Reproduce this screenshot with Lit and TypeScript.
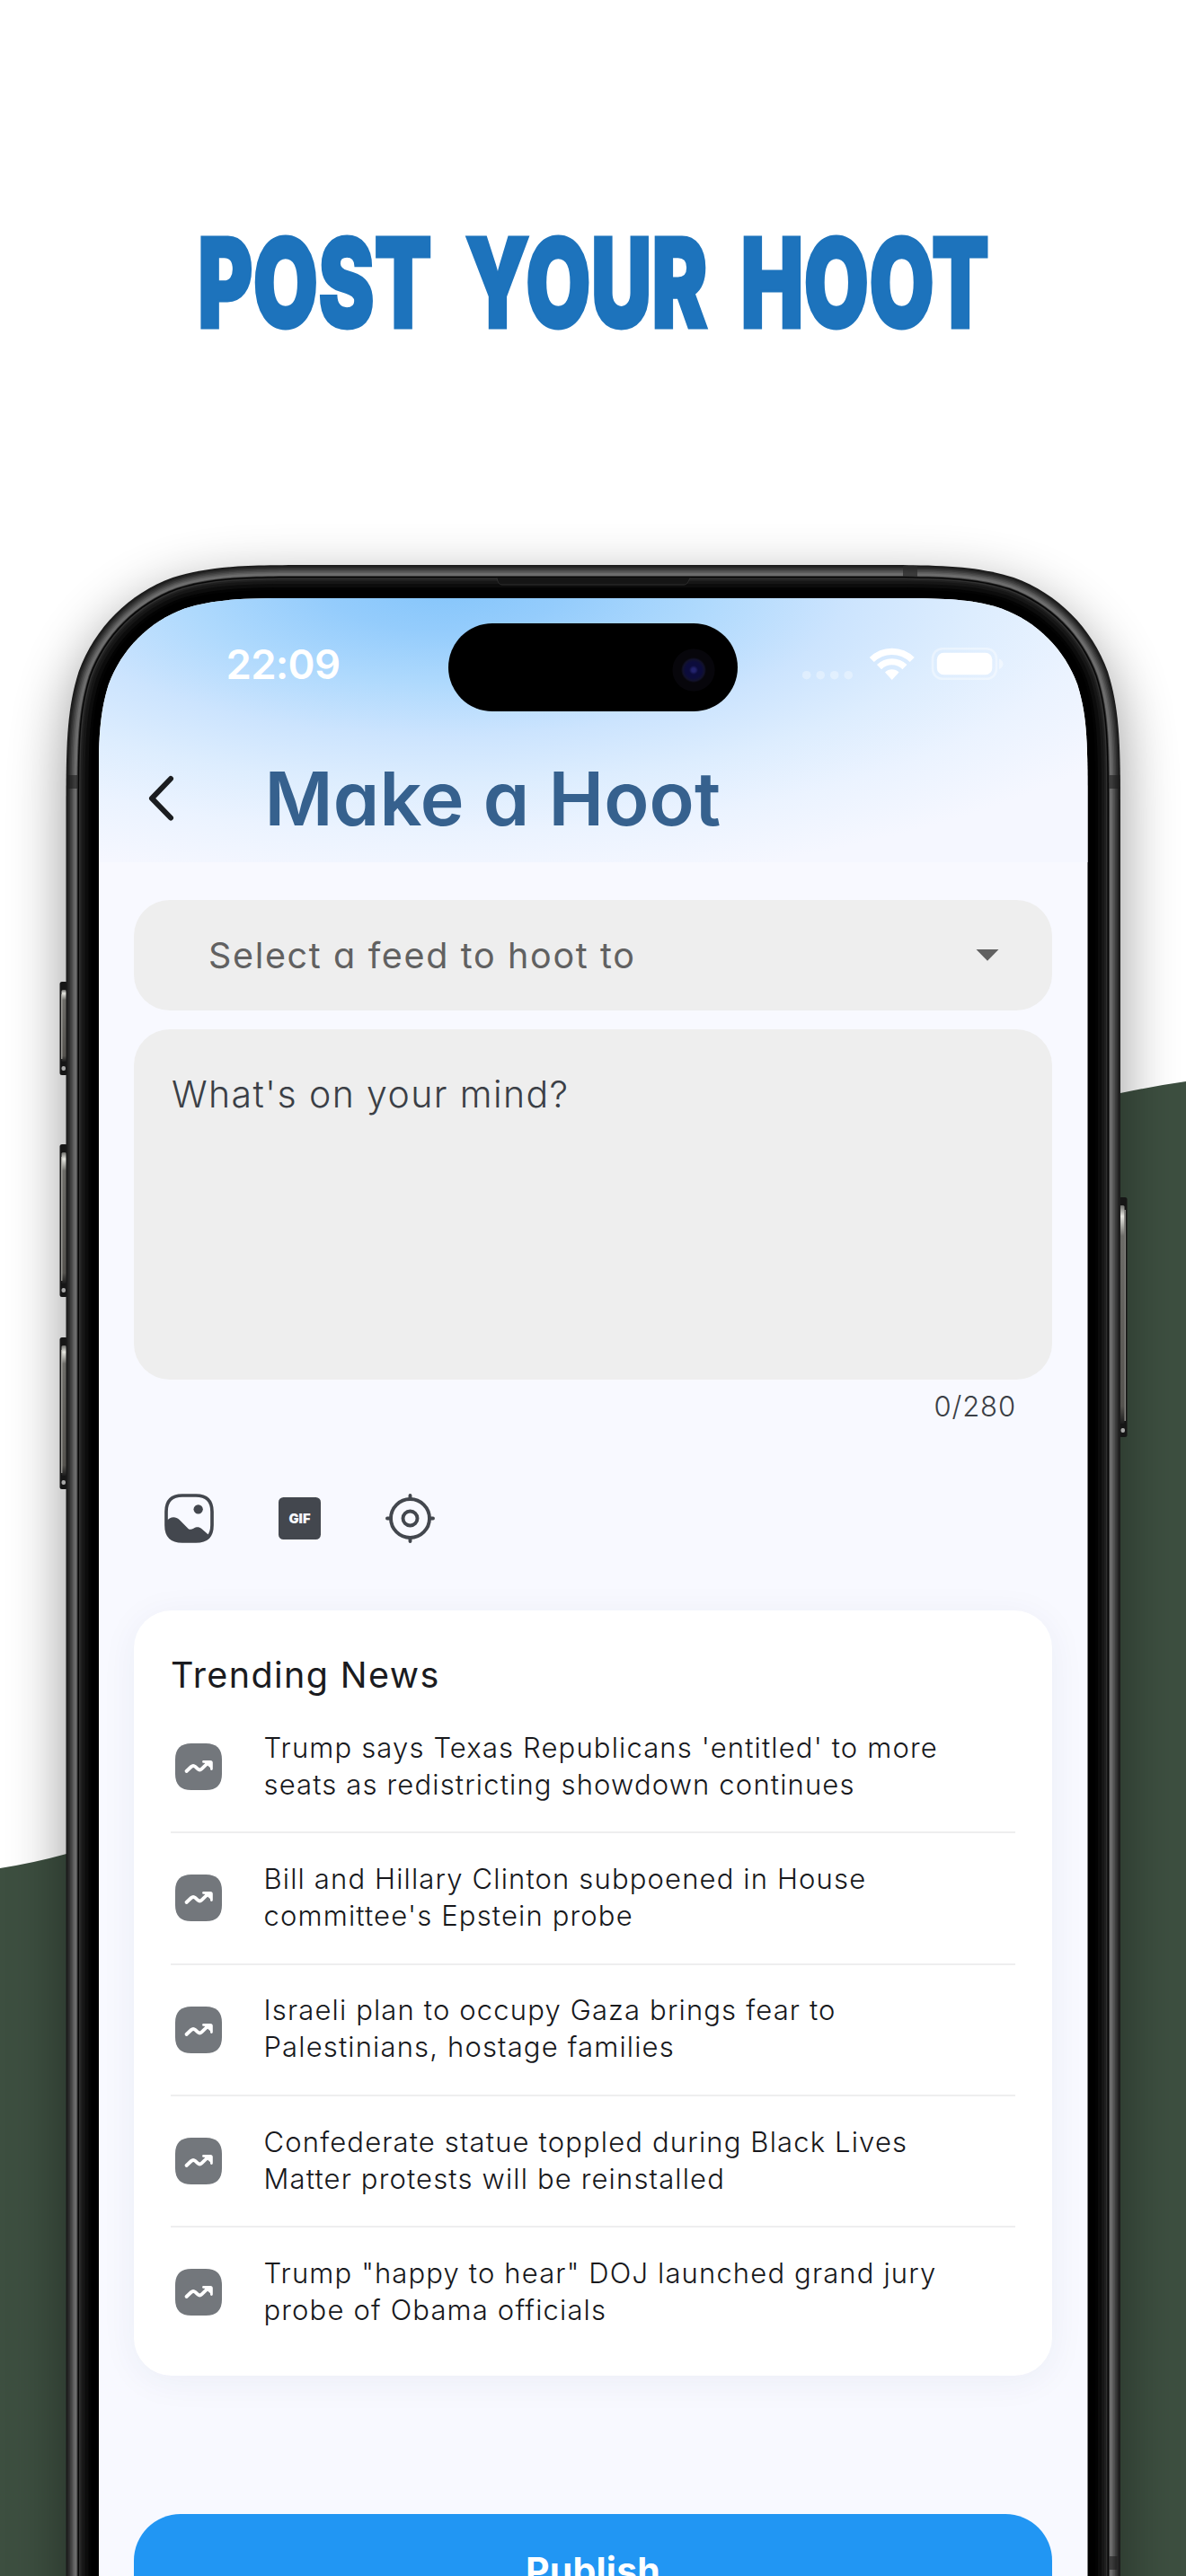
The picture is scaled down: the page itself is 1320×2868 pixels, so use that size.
import { LitElement, html, css, svg } from "lit";
import { customElement, property } from "lit/decorators.js";

/** Rectangle with continuous ("squircle") top corners, open-ended towards the bottom. */
function smoothTop(x: number, y: number, w: number, h: number, r: number): string {
  const k = (v: number) => +(v * r).toFixed(2);
  const X = x + w;
  return [
    `M${x} ${y + h}V${y + k(1.528665)}`,
    `C${x} ${y + k(1.088493)} ${x} ${y + k(0.868407)} ${x + k(0.074911)} ${y + k(0.631494)}`,
    `C${x + k(0.16906)} ${y + k(0.372824)} ${x + k(0.372824)} ${y + k(0.16906)} ${x + k(0.631494)} ${y + k(0.074911)}`,
    `C${x + k(0.868407)} ${y} ${x + k(1.088493)} ${y} ${x + k(1.528665)} ${y}`,
    `H${X - k(1.528665)}`,
    `C${X - k(1.088493)} ${y} ${X - k(0.868407)} ${y} ${X - k(0.631494)} ${y + k(0.074911)}`,
    `C${X - k(0.372824)} ${y + k(0.16906)} ${X - k(0.16906)} ${y + k(0.372824)} ${X - k(0.074911)} ${y + k(0.631494)}`,
    `C${X} ${y + k(0.868407)} ${X} ${y + k(1.088493)} ${X} ${y + k(1.528665)}`,
    `V${y + h}Z`,
  ].join("");
}

/** Metal rim, from the outer edge inwards: [inset, colour]. */
const RIM: [number, string][] = [
  [0, "#1b1b1b"], [1.5, "#232323"], [3, "#303030"], [4.5, "#3e3e3e"],
  [6, "#4d4d4d"], [7.5, "#5c5c5c"], [9, "#6b6b6b"], [10.5, "#6e6e6e"],
  [12, "#3a3a3a"], [13, "#060606"], [14.5, "#303030"], [16, "#1f1f1f"],
  [18, "#161616"], [21, "#0c0c0c"], [25, "#030303"], [28, "#000000"],
];

const HEADLINES: [string, string][] = [
  ["Trump says Texas Republicans 'entitled' to more", "seats as redistricting showdown continues"],
  ["Bill and Hillary Clinton subpoened in House", "committee's Epstein probe"],
  ["Israeli plan to occupy Gaza brings fear to", "Palestinians, hostage families"],
  ["Confederate statue toppled during Black Lives", "Matter protests will be reinstalled"],
  ["Trump \"happy to hear\" DOJ launched grand jury", "probe of Obama officials"],
];

@customElement("device-frame")
class DeviceFrame extends LitElement {
  static styles = css`
    :host { display: block; }
    svg { display: block; }
  `;

  private sideButton(x: number, y: number, h: number, right = false) {
    return svg`
      <g transform="translate(${x} ${y})">
        <rect width="9" height=${h} rx="2.5" fill="#161616"/>
        <rect x=${right ? 0.5 : 2} y="9" width="5.5" height=${h - 24} rx="1.5" fill="url(#button)"/>
        <rect x=${right ? 6 : 1.5} y="14" width="1.4" height=${h - 32} fill="#b9b8b2" opacity=".75"/>
        <rect x="2" y=${h - 10} width="4.5" height="5" rx="2" fill="#a8a8a8"/>
      </g>`;
  }

  render() {
    return html`
      <svg width="1320" height="2868" viewBox="0 0 1320 2868">
        <defs>
          <linearGradient id="button" x1="0" y1="0" x2="0" y2="1">
            <stop offset="0" stop-color="#6f6f6c"/>
            <stop offset=".05" stop-color="#e6e6e0"/>
            <stop offset=".14" stop-color="#6d6c68"/>
            <stop offset=".92" stop-color="#55534f"/>
            <stop offset="1" stop-color="#1c1c1c"/>
          </linearGradient>
          <filter id="soft" x="-20%" y="-20%" width="140%" height="140%">
            <feGaussianBlur stdDeviation="32"/>
          </filter>
        </defs>
        <path fill="#3d4f40" d="M0 2080Q38 2074 74 2064Q660 1960 800 1500Q900 1290 1247 1217Q1285 1209 1320 1204V2868H0Z"/>
        <path d=${smoothTop(73.5, 650, 1173.5, 2400, 188)} fill="#000" opacity=".41" filter="url(#soft)"/>
        ${this.sideButton(66.5, 1093, 104)}
        ${this.sideButton(66.5, 1274, 170)}
        ${this.sideButton(66.5, 1489, 169)}
        ${this.sideButton(1245.5, 1333, 267, true)}
        ${RIM.map(([i, c]) => svg`<path fill=${c} d=${smoothTop(73.5 + i, 629 + i, 1173.5 - 2 * i, 2400, 188 - i)}/>`)}
        <rect x="1005" y="630" width="16" height="12" fill="#2b2b2b" opacity=".75"/>
        <rect x="74" y="863" width="12" height="15" fill="#1c1c1c" opacity=".6"/>
        <rect x="1234.5" y="863" width="12" height="15" fill="#1c1c1c" opacity=".6"/>
        <rect x="1234.5" y="2846" width="9" height="15" fill="#1c1c1c" opacity=".6"/>
        <path d="M553 643.5c1 4 2 7.500 6 7.500H761c4 0 5-3.500 7-7.500" fill="#151515" stroke="#303030" stroke-width="1"/>
      </svg>`;
  }
}

@customElement("status-bar")
class StatusBar extends LitElement {
  static styles = css`
    :host { display: flex; height: 126px; position: relative; }
    .time {
      margin: 46px 0 0 142px;
      font: 600 45.500px/56px Inter, sans-serif;
      letter-spacing: -0.700px;
      color: #fff;
    }
    .island {
      position: absolute;
      left: 389.500px;
      top: 28px;
      width: 322px;
      height: 98px;
      border-radius: 49px;
      background: #000;
    }
    .lens {
      position: absolute;
      right: 25px;
      top: 28px;
      width: 48px;
      height: 48px;
      border-radius: 50%;
      background: radial-gradient(circle, #23236e 0 2px, #0c0c3c 5px 9px, #12122c 12px, #07060b 14px 23px, #000 24px);
    }
    svg { margin: 50px 94px 0 auto; }
  `;

  render() {
    return html`
      <div class="time">22:09</div>
      <div class="island"><div class="lens"></div></div>
      <svg width="226" height="44" viewBox="890 716 226 44">
        <g fill="#fff" fill-opacity=".34">
          ${[896.7, 912.2, 927.7, 943.2].map((x) => svg`<circle cx=${x} cy="751.700" r="4.800"/>`)}
        </g>
        <g fill="none" stroke="#fff" stroke-width="7.200">
          <path d="M969.300 734.500A32 32 0 0 1 1014.200 734.500"/>
          <path d="M977.500 742.600A20.300 20.300 0 0 1 1006 742.600"/>
        </g>
        <path fill="#fff" d="M991.750 757L984 748.500A11 11 0 0 1 999.500 748.500Z"/>
        <rect x="1037" y="722.200" width="71" height="33.600" rx="11" fill="none" stroke="#fff" stroke-opacity=".4" stroke-width="2.600"/>
        <rect x="1041.800" y="726.700" width="61.500" height="24.600" rx="7.500" fill="#fff"/>
        <path d="M1111 733.500c6 2.500 6 9 0 11.500z" fill="#fff" fill-opacity=".45"/>
      </svg>`;
  }
}

@customElement("news-row")
class NewsRow extends LitElement {
  @property({ attribute: false }) lines: string[] = [];

  static styles = css`
    :host { display: flex; align-items: center; gap: 46.500px; height: 144.300px; padding-left: 5px; }
    svg { flex: none; }
    .text {
      margin-top: -3px;
      font: 300 31px/41px Inter, sans-serif;
      letter-spacing: 1.150px;
      color: #17181c;
      white-space: nowrap;
    }
  `;

  render() {
    return html`
      <svg width="52" height="52" viewBox="0 0 52 52">
        <path fill="#73777c" d="M18 0H34Q52 0 52 18V34Q52 52 34 52H18Q0 52 0 34V18Q0 0 18 0Z"/>
        <path d="M12.500 31l5.300-5c1.500-1.400 3-1.400 4.500-.1l2.700 2.500c1.500 1.400 3 1.400 4.500 0l7-6.700" fill="none" stroke="#fff" stroke-width="3.800" stroke-linecap="round"/>
        <path d="M31.500 20.400h7.700a1.200 1.200 0 0 1 1.200 1.200v7" fill="#fff" stroke="#fff" stroke-width="2.800" stroke-linecap="round" stroke-linejoin="round"/>
      </svg>
      <div class="text">${this.lines.map((l) => html`<div>${l}</div>`)}</div>`;
  }
}

@customElement("app-root")
class AppRoot extends LitElement {
  static styles = css`
    :host {
      display: block;
      position: relative;
      width: 1320px;
      height: 2868px;
      overflow: hidden;
      background: #fff;
      font-family: Inter, sans-serif;
    }
    device-frame { position: absolute; inset: 0; }
    .poster { position: relative; display: flex; flex-direction: column; height: 100%; }
    .headline { display: block; flex: none; }
    .headline text {
      font: 900 138.500px Inter, sans-serif;
      word-spacing: 26px;
      fill: #1d73bc;
      stroke: #1d73bc;
      stroke-width: 2.800px;
    }
    .screen {
      flex: none;
      height: 2202px;
      width: 1101px;
      margin-left: 109.500px;
      background: #f8f9ff;
      display: flex;
      flex-direction: column;
    }
    .top {
      height: 294px;
      background: radial-gradient(ellipse 900px 335px at 385px -14px,
        #84c5fb 0%, #94ccfc 15%, #aed9fd 32%, #cce4fe 50%, #ddedfe 66%, #ebf3ff 82%, #f5f7ff 100%);
    }
    .bar { display: flex; align-items: center; height: 194px; padding-left: 53px; }
    .bar h1 {
      margin: 0 0 0 100px;
      font: 600 82.500px/100px Inter, sans-serif;
      font-feature-settings: "cv11";
      letter-spacing: 0.200px;
      color: #36618e;
      white-space: nowrap;
    }
    .body { display: flex; flex-direction: column; padding: 42px 39.500px 0; }
    .select {
      display: flex;
      align-items: center;
      justify-content: space-between;
      height: 123px;
      padding: 0 59px 0 83px;
      border-radius: 40px;
      background: #eee;
      color: #616161;
      font-size: 39.500px;
      font-feature-settings: "cv11";
      letter-spacing: 1.650px;
    }
    .composer {
      height: 390.500px;
      margin-top: 20.500px;
      padding: 47px 42px;
      box-sizing: border-box;
      border-radius: 40px;
      background: #eee;
      color: #3b3f46;
      font-size: 41px;
      font-weight: 300;
      line-height: 50px;
      letter-spacing: 1.400px;
    }
    .count {
      margin: 10px 40px 0 0;
      text-align: right;
      font-size: 31px;
      font-weight: 300;
      line-height: 40px;
      letter-spacing: 0.900px;
      color: #3b3f46;
    }
    .tools { display: flex; align-items: center; height: 56px; margin-top: 76px; padding-left: 34px; }
    .gif { margin-left: 72px; }
    .target { margin-left: 72px; }
    .gif text { font: 900 14.500px Inter, sans-serif; fill: #f8f9ff; }
    .card {
      height: 852.500px;
      margin-top: 74.500px;
      padding: 0 41px;
      box-sizing: border-box;
      border-radius: 42px;
      background: #fff;
      box-shadow: 0 6px 40px rgba(40, 50, 110, 0.06);
    }
    .card h2 {
      margin: 0;
      padding-top: 47px;
      font: 400 39.500px/50px Inter, sans-serif;
      font-feature-settings: "cv11";
      letter-spacing: 1.400px;
      color: #1a1b20;
    }
    .rows { margin-top: 5.500px; }
    news-row + news-row { border-top: 2px solid #eeeeef; }
    .publish {
      height: 130px;
      margin-top: 154px;
      padding-top: 38px;
      box-sizing: border-box;
      border-radius: 52px;
      background: #2196f3;
      color: #fff;
      text-align: center;
      font: 700 41px/50px Inter, sans-serif;
      letter-spacing: 0.200px;
    }
  `;

  render() {
    const clip = smoothTop(0, 0, 1101, 2300, 152);
    return html`
      <device-frame></device-frame>
      <div class="poster">
        <svg class="headline" width="1320" height="666" viewBox="0 0 1320 666">
          <text x="220" y="364.500" textLength="881" lengthAdjust="spacingAndGlyphs">POST YOUR HOOT</text>
        </svg>
        <div class="screen" style="clip-path: path('${clip}')">
          <div class="top">
            <status-bar></status-bar>
            <div class="bar">
              <svg width="32" height="54" viewBox="0 0 32 54">
                <path d="M27 5.500L6 27.300L27 49" transform="translate(0 -0.500)" fill="none" stroke="#1b1d20" stroke-width="6" stroke-linecap="round" stroke-linejoin="round"/>
              </svg>
              <h1>Make a Hoot</h1>
            </div>
          </div>
          <div class="body">
            <div class="select">
              <span>Select a feed to hoot to</span>
              <svg width="26" height="13" viewBox="0 0 26 13"><path d="M.5 0h25L13 12.800z" fill="#616161"/></svg>
            </div>
            <div class="composer">What's on your mind?</div>
            <div class="count">0/280</div>
            <div class="tools">
              <svg width="55" height="55" viewBox="0 0 165 165">
                <path d="M60 6H105Q159 6 159 60V105Q159 159 105 159H60Q6 159 6 105V60Q6 6 60 6Z" fill="none" stroke="#43474e" stroke-width="11"/>
                <circle cx="113" cy="52" r="15.500" fill="#43474e"/>
                <path d="M6 92C16 80 34 72 50 87L76 113C83 121 88 121 97 116C108 110 116 111 124 117L154 143C148 156 124 160 82 160C30 160 4 148 6 92Z" fill="#43474e"/>
              </svg>
              <svg class="gif" width="47" height="47" viewBox="0 0 47 47">
                <rect width="47" height="47" rx="5.500" fill="#43474e"/>
                <text x="11.500" y="28.600" textLength="24" lengthAdjust="spacingAndGlyphs">GIF</text>
              </svg>
              <svg class="target" width="55" height="55" viewBox="0 0 55 55">
                <g fill="none" stroke="#43474e" stroke-width="3.900" stroke-linecap="round">
                  <circle cx="27.500" cy="27.500" r="21.500"/>
                  <circle cx="27.500" cy="27.500" r="8"/>
                  <path d="M27.500 2V6M27.500 49V53M2 27.500H6M49 27.500H53"/>
                </g>
              </svg>
            </div>
            <section class="card">
              <h2>Trending News</h2>
              <div class="rows">
                ${HEADLINES.map((l) => html`<news-row .lines=${l}></news-row>`)}
              </div>
            </section>
            <div class="publish">Publish</div>
          </div>
        </div>
      </div>`;
  }
}
